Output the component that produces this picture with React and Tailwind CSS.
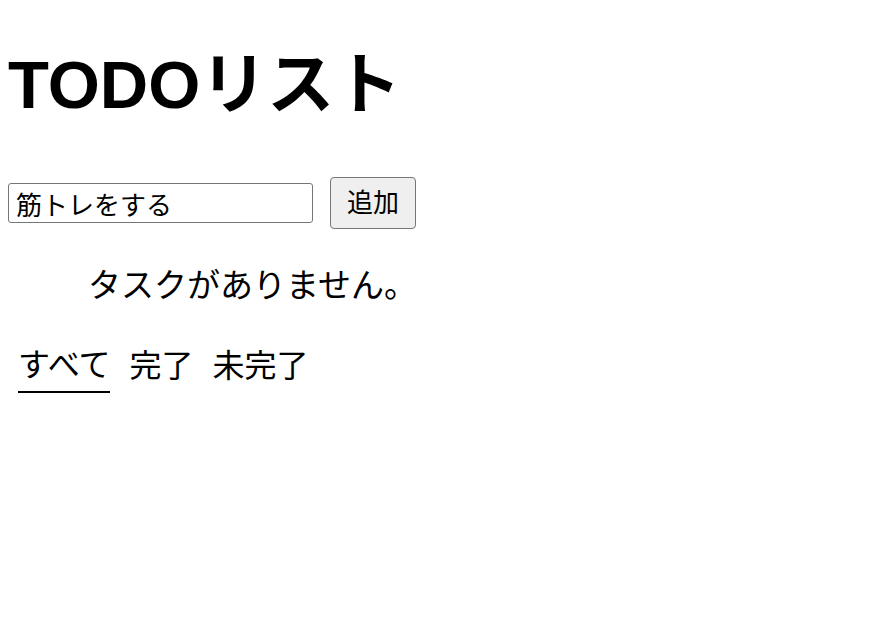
export default function App() {
  return (
    <div className="min-h-[618px] bg-white p-2 text-black font-['Liberation_Sans','Noto_Sans_CJK_JP',sans-serif]">
      <h1 className="mt-[43px] text-[67px] font-bold leading-none">TODOリスト</h1>
      <div className="mt-[59px] flex items-center gap-[17px]">
        <input
          type="text"
          defaultValue="筋トレをする"
          className="h-[40px] w-[305px] rounded-[3px] border-[1.5px] border-[#767676] px-[7px] text-[26px] leading-none outline-none"
        />
        <button className="h-[52px] w-[86px] rounded-[4px] border-[1.5px] border-[#767676] bg-[#efefef] text-[26px] leading-none">
          追加
        </button>
      </div>
      <p className="mt-[40px] pl-[80px] text-[33px] leading-none">タスクがありません。</p>
      <div className="mt-[47px] flex gap-[19px] pl-[10px] text-[32px] leading-none">
        <button className="border-b-2 border-black pb-[10px]">すべて</button>
        <button className="pb-[10px]">完了</button>
        <button className="pb-[10px]">未完了</button>
      </div>
    </div>
  );
}
